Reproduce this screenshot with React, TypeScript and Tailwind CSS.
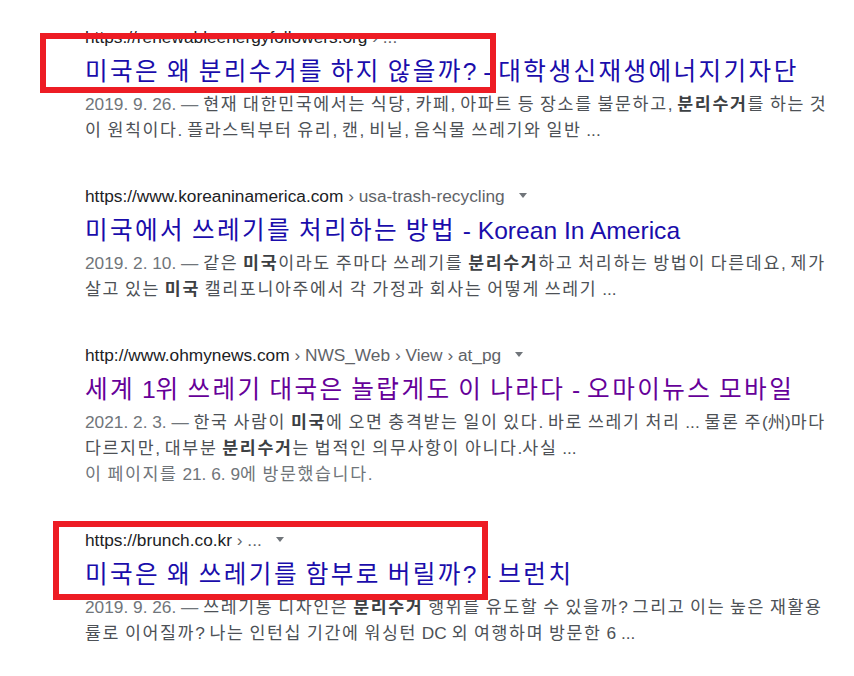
import React from "react";

type Seg = string | { b: string };

const FONT = { fontFamily: '"Liberation Sans", Arial, "Noto Sans CJK KR", sans-serif' };

const HANGUL = /([\u1100-\u11FF\u3130-\u318F\uAC00-\uD7AF]+)/;

function K({ text, track }: { text: string; track: string }) {
  const parts = text.split(HANGUL);
  return (
    <>
      {parts.map((p, i) =>
        i % 2 === 1 ? (
          <span key={i} className={track}>
            {p}
          </span>
        ) : (
          <React.Fragment key={i}>{p}</React.Fragment>
        )
      )}
    </>
  );
}

function Arrow() {
  return (
    <span className="inline-block align-middle ml-[14px] mb-[3px] w-0 h-0 border-l-[4px] border-r-[4px] border-t-[5px] border-l-transparent border-r-transparent border-t-[#70757a]" />
  );
}

const ST = "tracking-[1.65px]";

function Line({ segs, date }: { segs: Seg[]; date?: string }) {
  return (
    <div className="whitespace-nowrap">
      {date && <span className="text-[#70757a]">{date}</span>}
      {segs.map((s, i) =>
        typeof s === "string" ? (
          <span key={i}>
            <K text={s} track={ST} />
          </span>
        ) : (
          <b key={i} className="font-bold text-[#3c4043]">
            <K text={s.b} track={ST} />
          </b>
        )
      )}
    </div>
  );
}

type R = {
  domain: string;
  crumbs: string;
  title: string;
  visited?: boolean;
  date: string;
  lines: Seg[][];
  extra?: string;
};

const results: R[] = [
  {
    domain: "https://renewableenergyfollowers.org",
    crumbs: " › ...",
    title: "미국은 왜 분리수거를 하지 않을까? - 대학생신재생에너지기자단",
    date: "2019. 9. 26. — ",
    lines: [
      ["현재 대한민국에서는 식당, 카페, 아파트 등 장소를 불문하고, ", { b: "분리수거" }, "를 하는 것"],
      ["이 원칙이다. 플라스틱부터 유리, 캔, 비닐, 음식물 쓰레기와 일반 ..."],
    ],
  },
  {
    domain: "https://www.koreaninamerica.com",
    crumbs: " › usa-trash-recycling",
    title: "미국에서 쓰레기를 처리하는 방법 - Korean In America",
    date: "2019. 2. 10. — ",
    lines: [
      ["같은 ", { b: "미국" }, "이라도 주마다 쓰레기를 ", { b: "분리수거" }, "하고 처리하는 방법이 다른데요, 제가"],
      ["살고 있는 ", { b: "미국" }, " 캘리포니아주에서 각 가정과 회사는 어떻게 쓰레기 ..."],
    ],
  },
  {
    domain: "http://www.ohmynews.com",
    crumbs: " › NWS_Web › View › at_pg",
    title: "세계 1위 쓰레기 대국은 놀랍게도 이 나라다 - 오마이뉴스 모바일",
    visited: true,
    date: "2021. 2. 3. — ",
    lines: [
      ["한국 사람이 ", { b: "미국" }, "에 오면 충격받는 일이 있다. 바로 쓰레기 처리 ... 물론 주(州)마다"],
      ["다르지만, 대부분 ", { b: "분리수거" }, "는 법적인 의무사항이 아니다.사실 ..."],
    ],
    extra: "이 페이지를 21. 6. 9에 방문했습니다.",
  },
  {
    domain: "https://brunch.co.kr",
    crumbs: " › ...",
    title: "미국은 왜 쓰레기를 함부로 버릴까? - 브런치",
    date: "2019. 9. 26. — ",
    lines: [
      ["쓰레기통 디자인은 ", { b: "분리수거" }, " 행위를 유도할 수 있을까? 그리고 이는 높은 재활용"],
      ["률로 이어질까? 나는 인턴십 기간에 워싱턴 DC 외 여행하며 방문한 6 ..."],
    ],
  },
];

export default function App() {
  return (
    <div className="relative w-[854px] h-[676px] overflow-hidden bg-white" style={FONT}>
      <div className="flex flex-col gap-[42px] pt-[26px] pl-[85px]">
        {results.map((r, i) => (
          <div key={i} className="flex flex-col">
            <div className="text-[17.3px] leading-[22px] h-[22px] whitespace-nowrap">
              <span className="text-[#202124]">{r.domain}</span>
              <span className="text-[#5f6368]">{r.crumbs}</span>
              <Arrow />
            </div>
            <div
              className={
                "mt-[8px] text-[24.6px] leading-[32px] h-[32px] whitespace-nowrap " +
                (r.visited ? "text-[#660099]" : "text-[#1a0dab]")
              }
            >
              <K text={r.title} track="tracking-[2.4px]" />
            </div>
            <div className="mt-[3px] text-[17.3px] leading-[26px] text-[#4d5156]">
              {r.lines.map((l, j) => (
                <Line key={j} segs={l} date={j === 0 ? r.date : undefined} />
              ))}
              {r.extra && (
                <div className="whitespace-nowrap text-[#70757a]">
                  <K text={r.extra} track={ST} />
                </div>
              )}
            </div>
          </div>
        ))}
      </div>
      <div className="absolute left-[40px] top-[33px] w-[456px] h-[60px] border-[6px] border-[#ed1c24]" />
      <div className="absolute left-[53px] top-[521px] w-[435px] h-[79px] border-[6px] border-[#ed1c24]" />
    </div>
  );
}
